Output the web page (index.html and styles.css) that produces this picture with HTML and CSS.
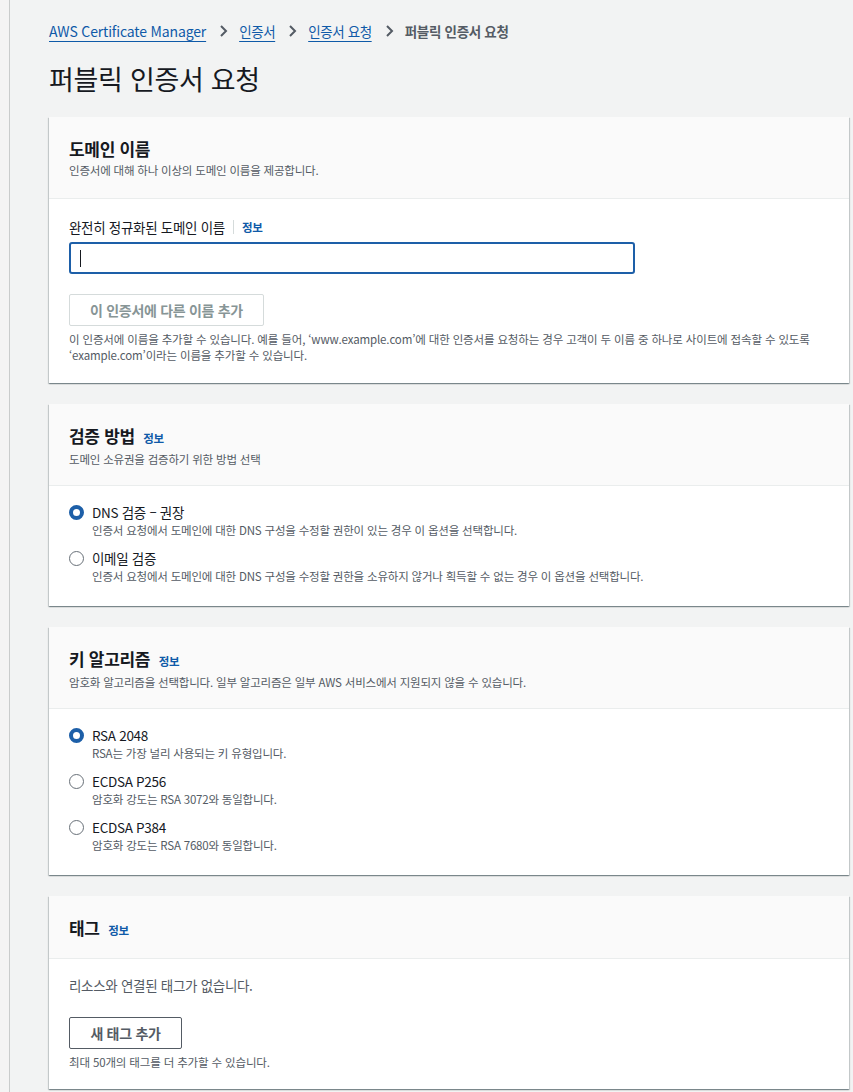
FILE: index.html
```html
<!DOCTYPE html>
<html lang="ko">
  <head>
    <meta charset="UTF-8" />
    <title>퍼블릭 인증서 요청</title>
    <link rel="stylesheet" href="styles.css">
  </head>
  <body>
    <div class="layout">
      <div class="side-rail"></div>
      <div class="main">
        <nav class="breadcrumbs">
          <a class="crumb" href="#">AWS Certificate Manager</a>
          <span class="chev"><svg width="16" height="16" viewBox="0 0 16 16"><path d="M6 3l5 5-5 5" fill="none" stroke="#545b64" stroke-width="2"/></svg></span>
          <a class="crumb crumb-ko" href="#">인증서</a>
          <span class="chev"><svg width="16" height="16" viewBox="0 0 16 16"><path d="M6 3l5 5-5 5" fill="none" stroke="#545b64" stroke-width="2"/></svg></span>
          <a class="crumb crumb-ko" href="#">인증서 요청</a>
          <span class="chev"><svg width="16" height="16" viewBox="0 0 16 16"><path d="M6 3l5 5-5 5" fill="none" stroke="#545b64" stroke-width="2"/></svg></span>
          <span class="crumb-current">퍼블릭 인증서 요청</span>
        </nav>

        <h1 class="page-title">퍼블릭 인증서 요청</h1>

        <div class="card">
          <div class="card-header">
            <h2 class="card-title">도메인 이름</h2>
            <div class="card-desc">인증서에 대해 하나 이상의 도메인 이름을 제공합니다.</div>
          </div>
          <div class="card-body">
            <div class="field-label">완전히 정규화된 도메인 이름 <span class="divider"></span><a class="info" href="#">정보</a></div>
            <div class="input"><span class="caret"></span></div>
            <div class="btn btn-disabled">이 인증서에 다른 이름 추가</div>
            <p class="hint">이 인증서에 이름을 추가할 수 있습니다. 예를 들어, ‘www.example.com’에 대한 인증서를 요청하는 경우 고객이 두 이름 중 하나로 사이트에 접속할 수 있도록 ‘example.com’이라는 이름을 추가할 수 있습니다.</p>
          </div>
        </div>

        <div class="card">
          <div class="card-header">
            <h2 class="card-title">검증 방법 <a class="info" href="#">정보</a></h2>
            <div class="card-desc">도메인 소유권을 검증하기 위한 방법 선택</div>
          </div>
          <div class="card-body radios">
            <div class="radio">
              <span class="dot checked"></span>
              <div>
                <div class="radio-label">DNS 검증 – 권장</div>
                <div class="radio-desc">인증서 요청에서 도메인에 대한 DNS 구성을 수정할 권한이 있는 경우 이 옵션을 선택합니다.</div>
              </div>
            </div>
            <div class="radio">
              <span class="dot"></span>
              <div>
                <div class="radio-label">이메일 검증</div>
                <div class="radio-desc">인증서 요청에서 도메인에 대한 DNS 구성을 수정할 권한을 소유하지 않거나 획득할 수 없는 경우 이 옵션을 선택합니다.</div>
              </div>
            </div>
          </div>
        </div>

        <div class="card">
          <div class="card-header">
            <h2 class="card-title">키 알고리즘 <a class="info" href="#">정보</a></h2>
            <div class="card-desc">암호화 알고리즘을 선택합니다. 일부 알고리즘은 일부 AWS 서비스에서 지원되지 않을 수 있습니다.</div>
          </div>
          <div class="card-body radios">
            <div class="radio">
              <span class="dot checked"></span>
              <div>
                <div class="radio-label">RSA 2048</div>
                <div class="radio-desc">RSA는 가장 널리 사용되는 키 유형입니다.</div>
              </div>
            </div>
            <div class="radio">
              <span class="dot"></span>
              <div>
                <div class="radio-label">ECDSA P256</div>
                <div class="radio-desc">암호화 강도는 RSA 3072와 동일합니다.</div>
              </div>
            </div>
            <div class="radio">
              <span class="dot"></span>
              <div>
                <div class="radio-label">ECDSA P384</div>
                <div class="radio-desc">암호화 강도는 RSA 7680와 동일합니다.</div>
              </div>
            </div>
          </div>
        </div>

        <div class="card">
          <div class="card-header header-short">
            <h2 class="card-title">태그 <a class="info" href="#">정보</a></h2>
          </div>
          <div class="card-body tags-body">
            <p class="empty">리소스와 연결된 태그가 없습니다.</p>
            <div class="btn btn-normal">새 태그 추가</div>
            <p class="hint">최대 50개의 태그를 더 추가할 수 있습니다.</p>
          </div>
        </div>
      </div>
    </div>
  </body>
</html>
```

FILE: styles.css
```css
* {
  box-sizing: border-box;
}

body {
  margin: 0;
  background: #f2f3f3;
  color: #16191f;
  font-family: "Noto Sans CJK KR", sans-serif;
  font-size: 13.5px;
  letter-spacing: -0.3px;
  word-break: keep-all;
}

.layout {
  display: flex;
  min-height: 1092px;
}

.side-rail {
  width: 10px;
  flex-shrink: 0;
  background: #f4f4f4;
  border-right: 1px solid #c9cccc;
}

.main {
  padding: 20px 0 0 39px;
  width: 843px;
}

.breadcrumbs {
  display: flex;
  align-items: center;
  height: 22px;
}

.crumb {
  color: #0f5aa8;
  font-size: 14px;
  letter-spacing: -0.15px;
  text-decoration: underline;
  text-underline-offset: 4px;
}

.crumb-ko {
  font-size: 13.5px;
  letter-spacing: -0.4px;
}

.chev {
  display: flex;
  margin: 0 8px 0 9px;
}

.crumb-current {
  color: #545b64;
  font-weight: 700;
  font-size: 13.5px;
}

.page-title {
  margin: 0;
  padding: 19px 0 20px;
  font-size: 27px;
  letter-spacing: -0.3px;
  font-weight: 400;
  line-height: 36px;
}

.card {
  width: 800px;
  background: #fff;
  margin-bottom: 21px;
  box-shadow: 0 1px 1px 0 rgba(0, 28, 36, 0.3), 1px 1px 1px 0 rgba(0, 28, 36, 0.15), -1px 1px 1px 0 rgba(0, 28, 36, 0.15);
}

.card-header {
  background: #fafafa;
  border-bottom: 1px solid #eaeded;
  padding: 20px 20px 18px;
  height: 82px;
}

.header-short {
  height: 63px;
}

.card-title {
  margin: 0;
  font-size: 17px;
  font-weight: 700;
  line-height: 24px;
}

.card-desc {
  margin-top: 1px;
  font-size: 11.5px;
  letter-spacing: -0.2px;
  color: #545b64;
  line-height: 16px;
}

.info {
  color: #0f5aa8;
  font-size: 11.5px;
  font-weight: 700;
  text-decoration: none;
  margin-left: 4px;
}

.card-body {
  padding: 18px 20px 20px;
}

.field-label {
  display: flex;
  align-items: center;
  line-height: 20px;
  margin-bottom: 5px;
}

.divider {
  display: inline-block;
  width: 1px;
  height: 14px;
  background: #d5dbdb;
  margin: 0 4px 0 8px;
}

.input {
  width: 566px;
  height: 32px;
  border: 2px solid #1d5fa8;
  border-radius: 3px;
  padding: 6px 9px;
}

.caret {
  display: block;
  width: 1px;
  height: 17px;
  background: #16191f;
}

.btn {
  display: inline-flex;
  align-items: center;
  justify-content: center;
  height: 32px;
  border-radius: 2px;
  font-weight: 700;
  font-size: 14px;
  white-space: nowrap;
}

.btn-disabled {
  margin-top: 20px;
  width: 195px;
  border: 1px solid #d5dbdb;
  color: #879596;
}

.btn-normal {
  width: 113px;
  border: 1px solid #545b64;
  color: #545b64;
}

.hint {
  margin: 5px 0 0;
  font-size: 11.5px;
  letter-spacing: -0.15px;
  line-height: 16px;
  color: #545b64;
}

.radios {
  padding-top: 16px;
  padding-bottom: 22px;
}

.radio {
  display: flex;
  margin-bottom: 10px;
}

.radio:last-child {
  margin-bottom: 0;
}

.dot {
  width: 15px;
  height: 15px;
  border-radius: 50%;
  border: 1.5px solid #687078;
  margin: 3px 8px 0 0;
  flex-shrink: 0;
}

.dot.checked {
  border: 4.5px solid #1d5fa8;
}

.radio-label {
  line-height: 20px;
}

.radio-desc {
  font-size: 11.5px;
  letter-spacing: -0.2px;
  line-height: 16px;
  color: #545b64;
}

.tags-body {
  padding-top: 16px;
  padding-bottom: 19px;
}

.empty {
  margin: 0 0 22px;
  color: #545b64;
  line-height: 20px;
}
```
